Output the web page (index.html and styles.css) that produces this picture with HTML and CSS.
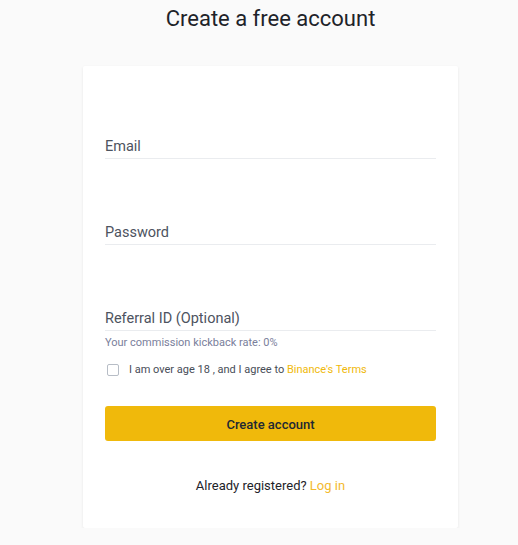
FILE: index.html
```html
<!DOCTYPE html>
<html>
<head>
<meta charset="utf-8">
<link rel="stylesheet" href="styles.css">
</head>
<body>
<div class="page">
  <h1 class="title">Create a free account</h1>
  <div class="card">
    <div class="field field-first"><span class="label">Email</span></div>
    <div class="field"><span class="label">Password</span></div>
    <div class="field"><span class="label">Referral ID (Optional)</span></div>
    <div class="hint">Your commission kickback rate: 0%</div>
    <label class="agree"><span class="box"></span><span class="agree-text">I am over age 18 , and I agree to <a class="link">Binance's Terms</a></span></label>
    <button class="btn">Create account</button>
    <div class="login">Already registered? <a class="link">Log in</a></div>
  </div>
</div>
</body>
</html>
```
FILE: styles.css
```css
html, body { margin: 0; padding: 0; }
body {
  background: #fafafa;
  font-family: Roboto, "Noto Sans", sans-serif;
  color: #1e2329;
}
.page {
  width: 375px;
  margin-left: 83px;
}
.title {
  margin: 0 0 32px;
  padding-top: 4px;
  line-height: 30px;
  font-size: 22px;
  font-weight: 400;
  text-align: center;
  color: #1e2329;
}
.card {
  padding: 0 22px 32px;
  background: #fff;
  border-radius: 2px;
  box-shadow: 0 1px 3px rgba(0,0,0,0.08);
}
.field {
  height: 86px;
  box-sizing: border-box;
  border-bottom: 1px solid #eaecef;
  display: flex;
  align-items: flex-end;
  padding-bottom: 1px;
}
.field-first { padding-top: 7px; height: 93px; }
.label {
  font-size: 14.5px;
  line-height: 21px;
  color: #4d5360;
}
.hint {
  margin-top: 4px;
  font-size: 11px;
  line-height: 16px;
  color: #7a809b;
}
.agree {
  margin-top: 10px;
  display: flex;
  align-items: center;
  font-size: 11px;
  line-height: 16px;
  color: #474d57;
}
.agree-text { padding-top: 1px; }
.box {
  width: 10px;
  height: 10px;
  border: 1px solid #b7bdc6;
  border-radius: 2px;
  margin: 1px 10px 0 2px;
}
.link { color: #f0b90b; text-decoration: none; }
.btn {
  display: block;
  width: 100%;
  margin-top: 28px;
  height: 35px;
  padding: 2px 0 0;
  border: 0;
  border-radius: 3px;
  background: #f0b90b;
  color: #212833;
  font-family: inherit;
  font-size: 13px;
  font-weight: 500;
}
.login {
  margin-top: 35px;
  text-align: center;
  font-size: 13px;
  line-height: 20px;
  color: #1e2329;
}
.login .link { color: #f3ba2f; }
```
